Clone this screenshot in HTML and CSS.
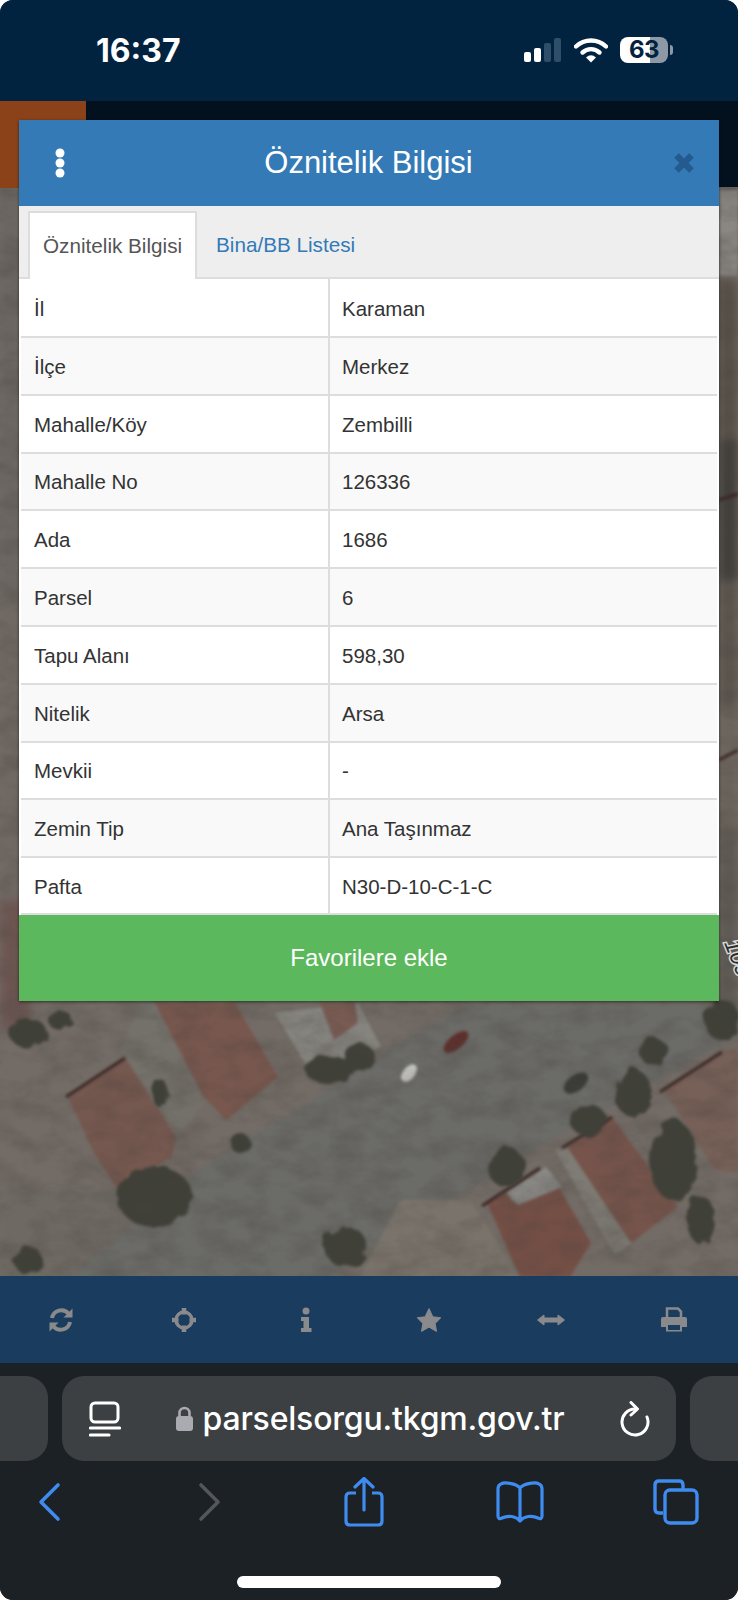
FILE: index.html
```html
<!DOCTYPE html>
<html lang="tr">
<head>
<meta charset="utf-8">
<title>Öznitelik Bilgisi</title>
<link rel="stylesheet" href="styles.css">
</head>
<body>
<div class="phone">
  <header class="status">
    <span class="time">16:37</span>
    <div class="status-icons">
      <svg class="sig" width="38" height="24" viewBox="0 0 38 24"><rect x="0" y="14" width="7" height="10" rx="2" fill="#fff"/><rect x="10" y="10" width="7" height="14" rx="2" fill="#fff"/><rect x="20" y="5" width="7" height="19" rx="2" fill="#2f4f69"/><rect x="30" y="0" width="7" height="24" rx="2" fill="#2f4f69"/></svg>
      <svg class="wifi" width="34" height="26" viewBox="0 0 34 26"><path d="M2 9.500C10.500 1.500 23.500 1.500 32 9.500" fill="none" stroke="#fff" stroke-width="4.400" stroke-linecap="round"/><path d="M8.500 15.500C13.500 11 20.500 11 25.500 15.500" fill="none" stroke="#fff" stroke-width="4.400" stroke-linecap="round"/><path d="M12 20.500Q17 16 22 20.500L17 25.500Z" fill="#fff"/></svg>
      <div class="battery"><span class="batt-num">63</span></div><span class="batt-tip"></span>
    </div>
  </header>

  <div class="viewport">
    <svg class="map" viewBox="0 101 738 1175" preserveAspectRatio="none">
      <defs>
        <filter id="soft" x="-5%" y="-5%" width="110%" height="110%" color-interpolation-filters="sRGB"><feGaussianBlur stdDeviation="1.500"/></filter>
        <filter id="softer" x="-5%" y="-5%" width="110%" height="110%" color-interpolation-filters="sRGB"><feGaussianBlur stdDeviation="5"/></filter>
        <filter id="leaf" x="-30%" y="-30%" width="160%" height="160%" color-interpolation-filters="sRGB">
          <feTurbulence type="fractalNoise" baseFrequency=".07" numOctaves="2" seed="4" result="n"/>
          <feDisplacementMap in="SourceGraphic" in2="n" scale="11"/>
          <feGaussianBlur stdDeviation="1.600"/>
        </filter>
        <filter id="grain" x="0" y="0" width="100%" height="100%" color-interpolation-filters="sRGB">
          <feTurbulence type="fractalNoise" baseFrequency=".03 .05" numOctaves="4" seed="11"/>
          <feColorMatrix values="0 0 0 0 .28  0 0 0 0 .26  0 0 0 0 .24  1.500 0 0 0 -.55"/>
        </filter>
      </defs>
      <rect x="0" y="101" width="738" height="1175" fill="#736c66"/>

      <g filter="url(#softer)">
        <rect x="0" y="188" width="19" height="420" fill="#6a6661"/>
        <rect x="0" y="600" width="19" height="330" fill="#6f6863"/>
        <rect x="0" y="900" width="30" height="130" fill="#6d5652"/>
        <rect x="719" y="280" width="19" height="160" fill="#575048"/>
        <rect x="719" y="440" width="19" height="140" fill="#413e3a"/>
        <rect x="719" y="580" width="19" height="130" fill="#5b554e"/>
        <rect x="719" y="710" width="19" height="120" fill="#6c655d"/>
        <rect x="719" y="830" width="19" height="180" fill="#5e5a54"/>
        <rect x="0" y="1190" width="130" height="90" fill="#6e6963"/>
      </g>

      <g filter="url(#soft)">
        <polygon points="70,1277 202,1167 301,1107 391,1047 471,1003 706,1003 738,1033 612,1107 551,1140 329,1277" fill="#6b6b67"/>
        <polygon points="68,1097 125,1058 176,1137 172,1157 118,1190 94,1153" fill="#75584f"/>
        <polygon points="155,1003 235,1003 278,1077 226,1120 188,1080" fill="#78574e"/>
        <polygon points="140,1003 155,1003 205,1100 180,1135 120,1050" fill="#74716a"/>
        <polygon points="275,1013 358,1003 381,1047 311,1073" fill="#86847f"/>
        <polygon points="320,1003 355,1003 358,1023 334,1040" fill="#785b53"/>
        <polygon points="567,1147 612,1117 678,1207 631,1243" fill="#76544b"/>
        <polygon points="487,1203 506,1192 513,1203 553,1177 591,1243 570,1277 520,1277" fill="#744f46"/>
        <polygon points="506,1192 546,1167 562,1187 518,1205" fill="#8a8986"/>
        <polygon points="664,1090 720,1053 738,1047 738,1173 715,1170" fill="#776057"/>
        <polygon points="400,1200 470,1200 520,1277 360,1277" fill="#79736b"/>
        <polygon points="555,1150 567,1147 631,1243 615,1255" fill="#7f7c75"/>
        <rect x="719" y="190" width="19" height="86" fill="#8a8682"/>
        <rect x="719" y="101" width="19" height="89" fill="#5f5d5a"/>
      </g>

      <rect x="0" y="101" width="86" height="87" fill="#8b4219"/>
      <rect x="86" y="101" width="652" height="86" fill="#03101d"/>

      <g stroke="#3a2522" stroke-width="3" filter="url(#soft)">
        <line x1="66" y1="1097" x2="125" y2="1058"/>
        <line x1="562" y1="1148" x2="612" y2="1117"/>
        <line x1="660" y1="1092" x2="722" y2="1052"/>
        <line x1="482" y1="1206" x2="540" y2="1168"/>
        <line x1="719" y1="500" x2="738" y2="494"/>
        <line x1="719" y1="760" x2="738" y2="750"/>
      </g>

      <g fill="#3f4038" filter="url(#leaf)">
        <ellipse cx="28" cy="1033" rx="19" ry="14"/>
        <ellipse cx="155" cy="1197" rx="38" ry="30"/>
        <ellipse cx="329" cy="1070" rx="24" ry="14"/>
        <ellipse cx="360" cy="1057" rx="14" ry="14"/>
        <ellipse cx="506" cy="1167" rx="18" ry="20"/>
        <ellipse cx="633" cy="1093" rx="18" ry="24"/>
        <ellipse cx="588" cy="1120" rx="18" ry="16"/>
        <ellipse cx="673" cy="1160" rx="24" ry="40"/>
        <ellipse cx="654" cy="1052" rx="14" ry="14"/>
        <ellipse cx="722" cy="1020" rx="18" ry="20"/>
        <ellipse cx="346" cy="1247" rx="21" ry="20"/>
        <ellipse cx="28" cy="1260" rx="14" ry="14"/>
        <ellipse cx="701" cy="1220" rx="14" ry="24"/>
        <ellipse cx="240" cy="1143" rx="10" ry="10"/>
        <ellipse cx="160" cy="1093" rx="8" ry="14"/>
        <ellipse cx="60" cy="1020" rx="12" ry="10"/>
      </g>

      <g filter="url(#soft)">
        <ellipse cx="576" cy="1083" rx="14" ry="8" transform="rotate(-38 576 1083)" fill="#3a3b37"/>
        <ellipse cx="456" cy="1042" rx="15" ry="7" transform="rotate(-40 456 1042)" fill="#5e2f2c"/>
        <ellipse cx="409" cy="1073" rx="10" ry="6" transform="rotate(-50 409 1073)" fill="#c9c9c4"/>
      </g>
      <rect x="0" y="188" width="738" height="1088" filter="url(#grain)" opacity=".4"/>
      <text x="724" y="943" class="map-label" transform="rotate(68 724 943)">109</text>
    </svg>

    <section class="modal">
      <div class="modal-head">
        <svg class="dots" width="10" height="30" viewBox="0 0 10 30"><circle cx="5" cy="5" r="4.500" fill="#fff"/><circle cx="5" cy="15" r="4.500" fill="#fff"/><circle cx="5" cy="25" r="4.500" fill="#fff"/></svg>
        <h1 class="modal-title">Öznitelik Bilgisi</h1>
        <svg class="close" width="24" height="24" viewBox="0 0 24 24"><path d="M4.500 4.500L19.500 19.500M19.500 4.500L4.500 19.500" stroke="#245a8e" stroke-width="6.500"/></svg>
      </div>
      <nav class="tabs">
        <span class="tab active">Öznitelik Bilgisi</span>
        <span class="tab link">Bina/BB Listesi</span>
      </nav>
      <div class="rows">
        <div class="row"><div class="cell">İl</div><div class="cell">Karaman</div></div>
        <div class="row"><div class="cell">İlçe</div><div class="cell">Merkez</div></div>
        <div class="row"><div class="cell">Mahalle/Köy</div><div class="cell">Zembilli</div></div>
        <div class="row"><div class="cell">Mahalle No</div><div class="cell">126336</div></div>
        <div class="row"><div class="cell">Ada</div><div class="cell">1686</div></div>
        <div class="row"><div class="cell">Parsel</div><div class="cell">6</div></div>
        <div class="row"><div class="cell">Tapu Alanı</div><div class="cell">598,30</div></div>
        <div class="row"><div class="cell">Nitelik</div><div class="cell">Arsa</div></div>
        <div class="row"><div class="cell">Mevkii</div><div class="cell">-</div></div>
        <div class="row"><div class="cell">Zemin Tip</div><div class="cell">Ana Taşınmaz</div></div>
        <div class="row"><div class="cell">Pafta</div><div class="cell">N30-D-10-C-1-C</div></div>
      </div>
      <button class="fav">Favorilere ekle</button>
    </section>
  </div>

  <div class="toolbar">
    <svg width="26" height="26" viewBox="0 0 26 26"><path d="M4 11A9.500 9.500 0 0 1 20.500 6.500M22 15A9.500 9.500 0 0 1 5.500 19.500" fill="none" stroke="#8a8a8c" stroke-width="4"/><path d="M24.500 1.500V10.500H15.500ZM1.500 24.500V15.500H10.500Z" fill="#8a8a8c"/></svg>
    <svg width="26" height="26" viewBox="0 0 26 26"><circle cx="13" cy="13" r="8" fill="none" stroke="#8a8a8c" stroke-width="3.400"/><path d="M13 1V7.500M13 18.500V25M1 13H7.500M18.500 13H25" stroke="#8a8a8c" stroke-width="4.600"/></svg>
    <svg width="26" height="26" viewBox="0 0 26 26"><circle cx="13" cy="4" r="3.500" fill="#8a8a8c"/><path d="M8 10H16V21H18.500V25H8V21H10.500V14H8Z" fill="#8a8a8c"/></svg>
    <svg width="26" height="26" viewBox="0 0 28 28"><path d="M14 2L18 10.500L26.500 11.500L20.500 17.500L22 26L14 21.500L6 26L7.500 17.500L1.500 11.500L10 10.500Z" fill="#8a8a8c" stroke="#8a8a8c" stroke-width="1.200" stroke-linejoin="round"/></svg>
    <svg width="30" height="16" viewBox="0 0 30 16"><path d="M1.500 8L8 3V6H22V3L28.500 8L22 13V10H8V13Z" fill="#8a8a8c" stroke="#8a8a8c" stroke-linejoin="round"/></svg>
    <svg width="28" height="26" viewBox="0 0 28 26"><path d="M7 10V1.500H18L21 4.500V10" fill="none" stroke="#8a8a8c" stroke-width="2.500"/><path d="M3 10H25Q27 10 27 12V20H22V24.500H6V20H1V12Q1 10 3 10Z" fill="#8a8a8c"/><rect x="8" y="18" width="12" height="5" fill="#1a3c5e"/></svg>
  </div>

  <div class="chrome">
    <div class="tab-row">
      <div class="side-pill left"></div>
      <div class="url-pill">
        <svg class="reader" width="32" height="36" viewBox="0 0 32 36"><rect x="2" y="2" width="27" height="19" rx="4" fill="none" stroke="#fff" stroke-width="3"/><path d="M1.500 27H30.500M1.500 34H20" stroke="#fff" stroke-width="3.200" stroke-linecap="round"/></svg>
        <div class="url">
          <svg width="19" height="26" viewBox="0 0 19 26"><path d="M4.500 11V7A5 5 0 0 1 14.500 7V11" fill="none" stroke="#a9abb0" stroke-width="2.600"/><rect x="1" y="10" width="17" height="15" rx="3" fill="#a9abb0"/></svg>
          <span class="url-text">parselsorgu.tkgm.gov.tr</span>
        </div>
        <svg class="reload" width="32" height="36" viewBox="0 0 32 36"><path d="M27 16A13 13 0 1 1 15 8" fill="none" stroke="#fff" stroke-width="3" stroke-linecap="round"/><path d="M11 1.500L17.500 8L11 14" fill="none" stroke="#fff" stroke-width="3" stroke-linecap="round" stroke-linejoin="round"/></svg>
      </div>
      <div class="side-pill right"></div>
    </div>
    <div class="nav-row">
      <svg class="nav-back" width="26" height="40" viewBox="0 0 26 40"><path d="M22 3L5 20L22 37" fill="none" stroke="#3f8cf0" stroke-width="3.600" stroke-linecap="round" stroke-linejoin="round"/></svg>
      <svg class="nav-forward" width="26" height="40" viewBox="0 0 26 40"><path d="M4 3L21 20L4 37" fill="none" stroke="#54575a" stroke-width="3.600" stroke-linecap="round" stroke-linejoin="round"/></svg>
      <svg class="nav-share" width="40" height="50" viewBox="0 0 40 50"><path d="M12 16H6Q2 16 2 20V44Q2 48 6 48H34Q38 48 38 44V20Q38 16 34 16H28" fill="none" stroke="#3f8cf0" stroke-width="3.200"/><path d="M20 33V3M11 10L20 1.500L29 10" fill="none" stroke="#3f8cf0" stroke-width="3.200" stroke-linecap="round" stroke-linejoin="round"/></svg>
      <svg class="nav-book" width="48" height="42" viewBox="0 0 48 42"><path d="M24 7C20 2 8 1 5 3Q2 4 2 8V35Q2 39 6 37C12 34 20 35 24 40C28 35 36 34 42 37Q46 39 46 35V8Q46 4 43 3C40 1 28 2 24 7ZM24 7V38" fill="none" stroke="#3f8cf0" stroke-width="3.200" stroke-linejoin="round"/></svg>
      <svg class="nav-tabs" width="46" height="46" viewBox="0 0 46 46"><path d="M10 34H6Q2 34 2 30V6Q2 2 6 2H26Q30 2 30 6V11" fill="none" stroke="#3f8cf0" stroke-width="3.400"/><rect x="12" y="11" width="32" height="33" rx="5" fill="none" stroke="#3f8cf0" stroke-width="3.400"/></svg>
    </div>
    <div class="home-bar"></div>
  </div>
</div>
</body>
</html>
```
FILE: styles.css
```css
* { box-sizing: border-box; }
html, body { margin: 0; padding: 0; background: #fff; }
body { width: 738px; height: 1600px; overflow: hidden; font-family: "Liberation Sans", Arial, sans-serif; }

.phone { width: 738px; height: 1600px; display: flex; flex-direction: column; border-radius: 13px; overflow: hidden; background: #1c2125; }

.status { height: 101px; flex: none; background: #02233f; display: flex; align-items: flex-start; justify-content: space-between; padding: 32px 65px 0 96px; color: #fff; }
.time { font-family: Inter, "Liberation Sans", sans-serif; font-size: 32px; line-height: 37px; font-weight: 700; letter-spacing: 0; }
.status-icons { display: flex; align-items: center; margin-top: 5px; }
.sig { margin-right: 12px; }
.wifi { margin-right: 12px; }
.battery { width: 48px; height: 26px; border-radius: 8px; background: linear-gradient(90deg, #fff 0 62%, #8e99a5 62%); display: flex; align-items: center; justify-content: center; }
.batt-num { font-family: Inter, "Liberation Sans", sans-serif; font-size: 24px; line-height: 26px; font-weight: 700; color: #02233f; letter-spacing: -.5px; }
.batt-tip { width: 3px; height: 10px; margin-left: 2px; border-radius: 0 3px 3px 0; background: #8e99a5; }

.viewport { flex: 1; position: relative; min-height: 0; }
.map { position: absolute; inset: 0; width: 100%; height: 100%; display: block; }
.map-label { font-family: "Liberation Sans", sans-serif; font-style: italic; font-size: 23px; fill: #2b2b2b; stroke: #d8d8d4; stroke-width: 3px; paint-order: stroke; }

.modal { position: absolute; left: 19px; top: 19px; width: 700px; display: flex; flex-direction: column; background: #eee; box-shadow: 0 1px 3px rgba(0, 0, 0, .55); }
.modal-head { height: 86px; flex: none; background: #337ab7; display: flex; align-items: center; justify-content: space-between; padding: 0 23px 0 36px; color: #fff; }
.modal-title { margin: 0; font-size: 31px; font-weight: 400; line-height: 40px; }
.close { display: block; }

.tabs { height: 73px; flex: none; display: flex; align-items: flex-end; padding-left: 9px; border-bottom: 2px solid #ddd; background: #eee; }
.tab { display: flex; align-items: center; font-size: 20.700px; height: 66px; padding: 2px 15px 0 15px; white-space: nowrap; }
.tab.active { background: #fff; color: #555; border: 2px solid #ddd; border-bottom: 0; width: 169px; height: 68px; margin-bottom: -2px; padding: 0 0 0 13px; }
.tab.link { color: #337ab7; padding-left: 19px; }

.rows { display: flex; flex-direction: column; padding: 0 2px; background: #fff; }
.row { display: grid; grid-template-columns: 307px 1fr; height: 57.800px; border-bottom: 2px solid #ddd; background: #fff; }
.row:first-child { height: 59px; }
.row:nth-child(even) { background: #f9f9f9; }
.row:last-child { height: 57px; }
.cell { display: flex; align-items: center; padding: 2px 13px 0; font-size: 20.500px; color: #333; }
.cell + .cell { border-left: 2px solid #ddd; padding: 2px 12px 0; }

.fav { height: 86px; border: 0; background: #5cb85c; color: #fff; font: 400 24px "Liberation Sans", Arial, sans-serif; width: 100%; }

.toolbar { height: 87px; flex: none; background: #1a3c5e; display: grid; grid-template-columns: repeat(6, 1fr); align-items: center; justify-items: center; padding: 0 3px 0 0; }

.chrome { height: 237px; flex: none; background: #1c2125; position: relative; padding-top: 13px; }
.tab-row { display: grid; grid-template-columns: 48px 1fr 48px; gap: 14px; height: 85px; }
.side-pill { background: #3c4043; }
.side-pill.left { border-radius: 0 22px 22px 0; }
.side-pill.right { border-radius: 22px 0 0 22px; }
.url-pill { background: #3c4043; border-radius: 22px; display: flex; align-items: center; justify-content: space-between; padding: 0 24px 0 27px; }
.url { display: flex; align-items: center; gap: 9px; margin-left: -2px; }
.url-text { font-family: Inter, "Liberation Sans", sans-serif; font-size: 32px; font-weight: 500; color: #fff; letter-spacing: -.2px; }
.nav-row { display: flex; align-items: center; padding-left: 36px; margin-top: 16px; }
.nav-forward { margin-left: 135px; }
.nav-share { margin-left: 121px; }
.nav-book { margin-left: 112px; }
.nav-tabs { margin-left: 109px; }
.home-bar { position: absolute; left: 237px; top: 213px; width: 264px; height: 12px; border-radius: 6px; background: #fff; }
```
